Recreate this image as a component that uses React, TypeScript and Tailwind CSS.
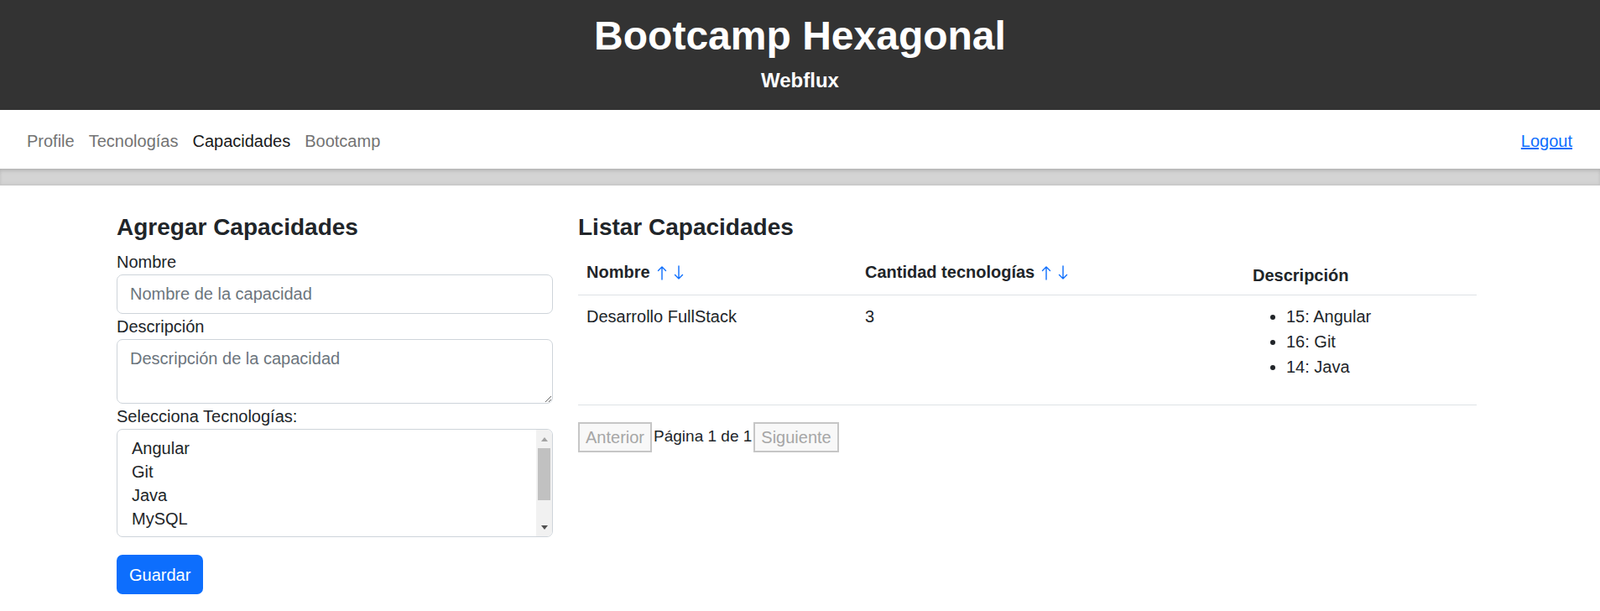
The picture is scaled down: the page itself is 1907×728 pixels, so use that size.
import React from 'react';

const techs = ['Angular', 'Git', 'Java', 'MySQL'];
const navLinks = [
    { label: 'Profile', active: false },
    { label: 'Tecnologías', active: false },
    { label: 'Capacidades', active: true },
    { label: 'Bootcamp', active: false },
];

function ArrowUp() {
    return (
        <svg width="12" height="18" viewBox="0 0 12 18" fill="none" stroke="#0d6efd" strokeWidth="1.4" strokeLinecap="round" strokeLinejoin="round" className="inline-block align-[-3px]">
            <path d="M6 17V2M1.5 6.5L6 2l4.5 4.5" />
        </svg>
    );
}

function ArrowDown() {
    return (
        <svg width="12" height="18" viewBox="0 0 12 18" fill="none" stroke="#0d6efd" strokeWidth="1.4" strokeLinecap="round" strokeLinejoin="round" className="inline-block align-[-3px]">
            <path d="M6 1v15M1.5 11.5L6 16l4.5-4.5" />
        </svg>
    );
}

function SortHeader({ label }: { label: string }) {
    return (
        <>
            {label}
            <button className="ml-[8px]"><ArrowUp /></button>
            <button className="ml-[8px]"><ArrowDown /></button>
        </>
    );
}

export default function App() {
    return (
        <div className="min-h-screen bg-white font-['Liberation_Sans',Arial,sans-serif] text-[#212529]">
            <header className="bg-[#333333] pt-[13px] pb-[20px] text-center text-white">
                <h1 className="text-[48px] leading-[60px] font-bold">Bootcamp Hexagonal</h1>
                <h5 className="mt-[8px] text-[24px] leading-[30px] font-bold">Webflux</h5>
            </header>

            <nav className="flex h-[70px] items-center justify-between pt-[3px] pl-[32px] pr-[33px] text-[20px] leading-[30px]">
                <ul className="flex gap-[17px]">
                    {navLinks.map(l => (
                        <li key={l.label}>
                            <a href="#" className={l.active ? 'text-[#1a1a1a]' : 'text-[#737373]'}>{l.label}</a>
                        </li>
                    ))}
                </ul>
                <a href="#" className="text-[#0d6efd] underline">Logout</a>
            </nav>
            <div className="h-[20px] border-b border-[#c6c6c6] bg-[#d4d4d4] shadow-[inset_0_5px_5px_-3px_rgba(0,0,0,0.14),inset_0_0_4px_rgba(0,0,0,0.08)]" />

            <main className="flex gap-[30px] pl-[139px] pt-[24px]">
                {/* form */}
                <section className="w-[520px]">
                    <h3 className="mb-[5px] pt-[5px] text-[28px] leading-[42px] font-bold">Agregar Capacidades</h3>

                    <label className="block text-[20px] leading-[30px]">Nombre</label>
                    <input
                        type="text"
                        placeholder="Nombre de la capacidad"
                        className="block h-[47px] w-full rounded-[7px] border border-[#ced4da] px-[15px] text-[20px] outline-none placeholder:text-[#6c757d]"
                    />

                    <label className="block text-[20px] leading-[30px]">Descripción</label>
                    <textarea
                        rows={2}
                        placeholder="Descripción de la capacidad"
                        className="block h-[77px] w-full rounded-[7px] border border-[#ced4da] px-[15px] py-[7px] text-[20px] leading-[30px] outline-none placeholder:text-[#6c757d]"
                    />

                    <label className="block text-[20px] leading-[30px]">Selecciona Tecnologías:</label>
                    <div className="flex h-[129px] overflow-hidden rounded-[7px] border border-[#ced4da] text-[20px]">
                        <div className="flex-1 pt-[8px] pl-[17px]">
                            {techs.map(t => (
                                <div key={t} className="h-[28px] leading-[28px]">{t}</div>
                            ))}
                        </div>
                        <div className="flex w-[19px] flex-col items-center bg-[#f1f1f1]">
                            <div className="flex h-[22px] items-center justify-center">
                                <div className="h-0 w-0 border-x-[4px] border-b-[5px] border-x-transparent border-b-[#a3a3a3]" />
                            </div>
                            <div className="h-[62px] w-[15px] bg-[#c1c1c1]" />
                            <div className="flex-1" />
                            <div className="flex h-[22px] items-center justify-center">
                                <div className="h-0 w-0 border-x-[4px] border-t-[5px] border-x-transparent border-t-[#505050]" />
                            </div>
                        </div>
                    </div>

                    <button className="mt-[21px] h-[47px] rounded-[7px] bg-[#0d6efd] px-[15px] text-[20px] text-white">Guardar</button>
                </section>

                {/* list */}
                <section className="w-[1071px]">
                    <h3 className="mb-[5px] pt-[5px] text-[28px] leading-[42px] font-bold">Listar Capacidades</h3>

                    <table className="w-full table-fixed border-collapse text-[20px] leading-[30px]">
                        <colgroup>
                            <col className="w-[332px]" />
                            <col className="w-[462px]" />
                            <col />
                        </colgroup>
                        <thead>
                            <tr className="border-b border-[#dee2e6]">
                                <th className="h-[54px] px-[10px] pb-[12px] text-left align-bottom font-bold"><SortHeader label="Nombre" /></th>
                                <th className="h-[54px] px-[10px] pb-[12px] text-left align-bottom font-bold"><SortHeader label="Cantidad tecnologías" /></th>
                                <th className="h-[54px] px-[10px] pb-[8px] text-left align-bottom font-bold">Descripción</th>
                            </tr>
                        </thead>
                        <tbody>
                            <tr className="border-b border-[#dee2e6]">
                                <td className="px-[10px] py-[10px] align-top">Desarrollo FullStack</td>
                                <td className="px-[10px] py-[10px] align-top">3</td>
                                <td className="px-[10px] py-[10px] align-top">
                                    <ul className="mb-[20px] list-disc pl-[40px]">
                                        <li>15: Angular</li>
                                        <li>16: Git</li>
                                        <li>14: Java</li>
                                    </ul>
                                </td>
                            </tr>
                        </tbody>
                    </table>

                    <div className="mt-[20px] flex items-center text-[20px]">
                        <button disabled className="h-[36px] border-2 border-[#c6c6c6] bg-[#f8f8f8] px-[7px] text-[#a6a6a6]">Anterior</button>
                        <span className="mx-[2px] text-[19px]">Página 1 de 1</span>
                        <button disabled className="h-[36px] border-2 border-[#c6c6c6] bg-[#f8f8f8] px-[7px] text-[#a6a6a6]">Siguiente</button>
                    </div>
                </section>
            </main>
        </div>
    );
}
